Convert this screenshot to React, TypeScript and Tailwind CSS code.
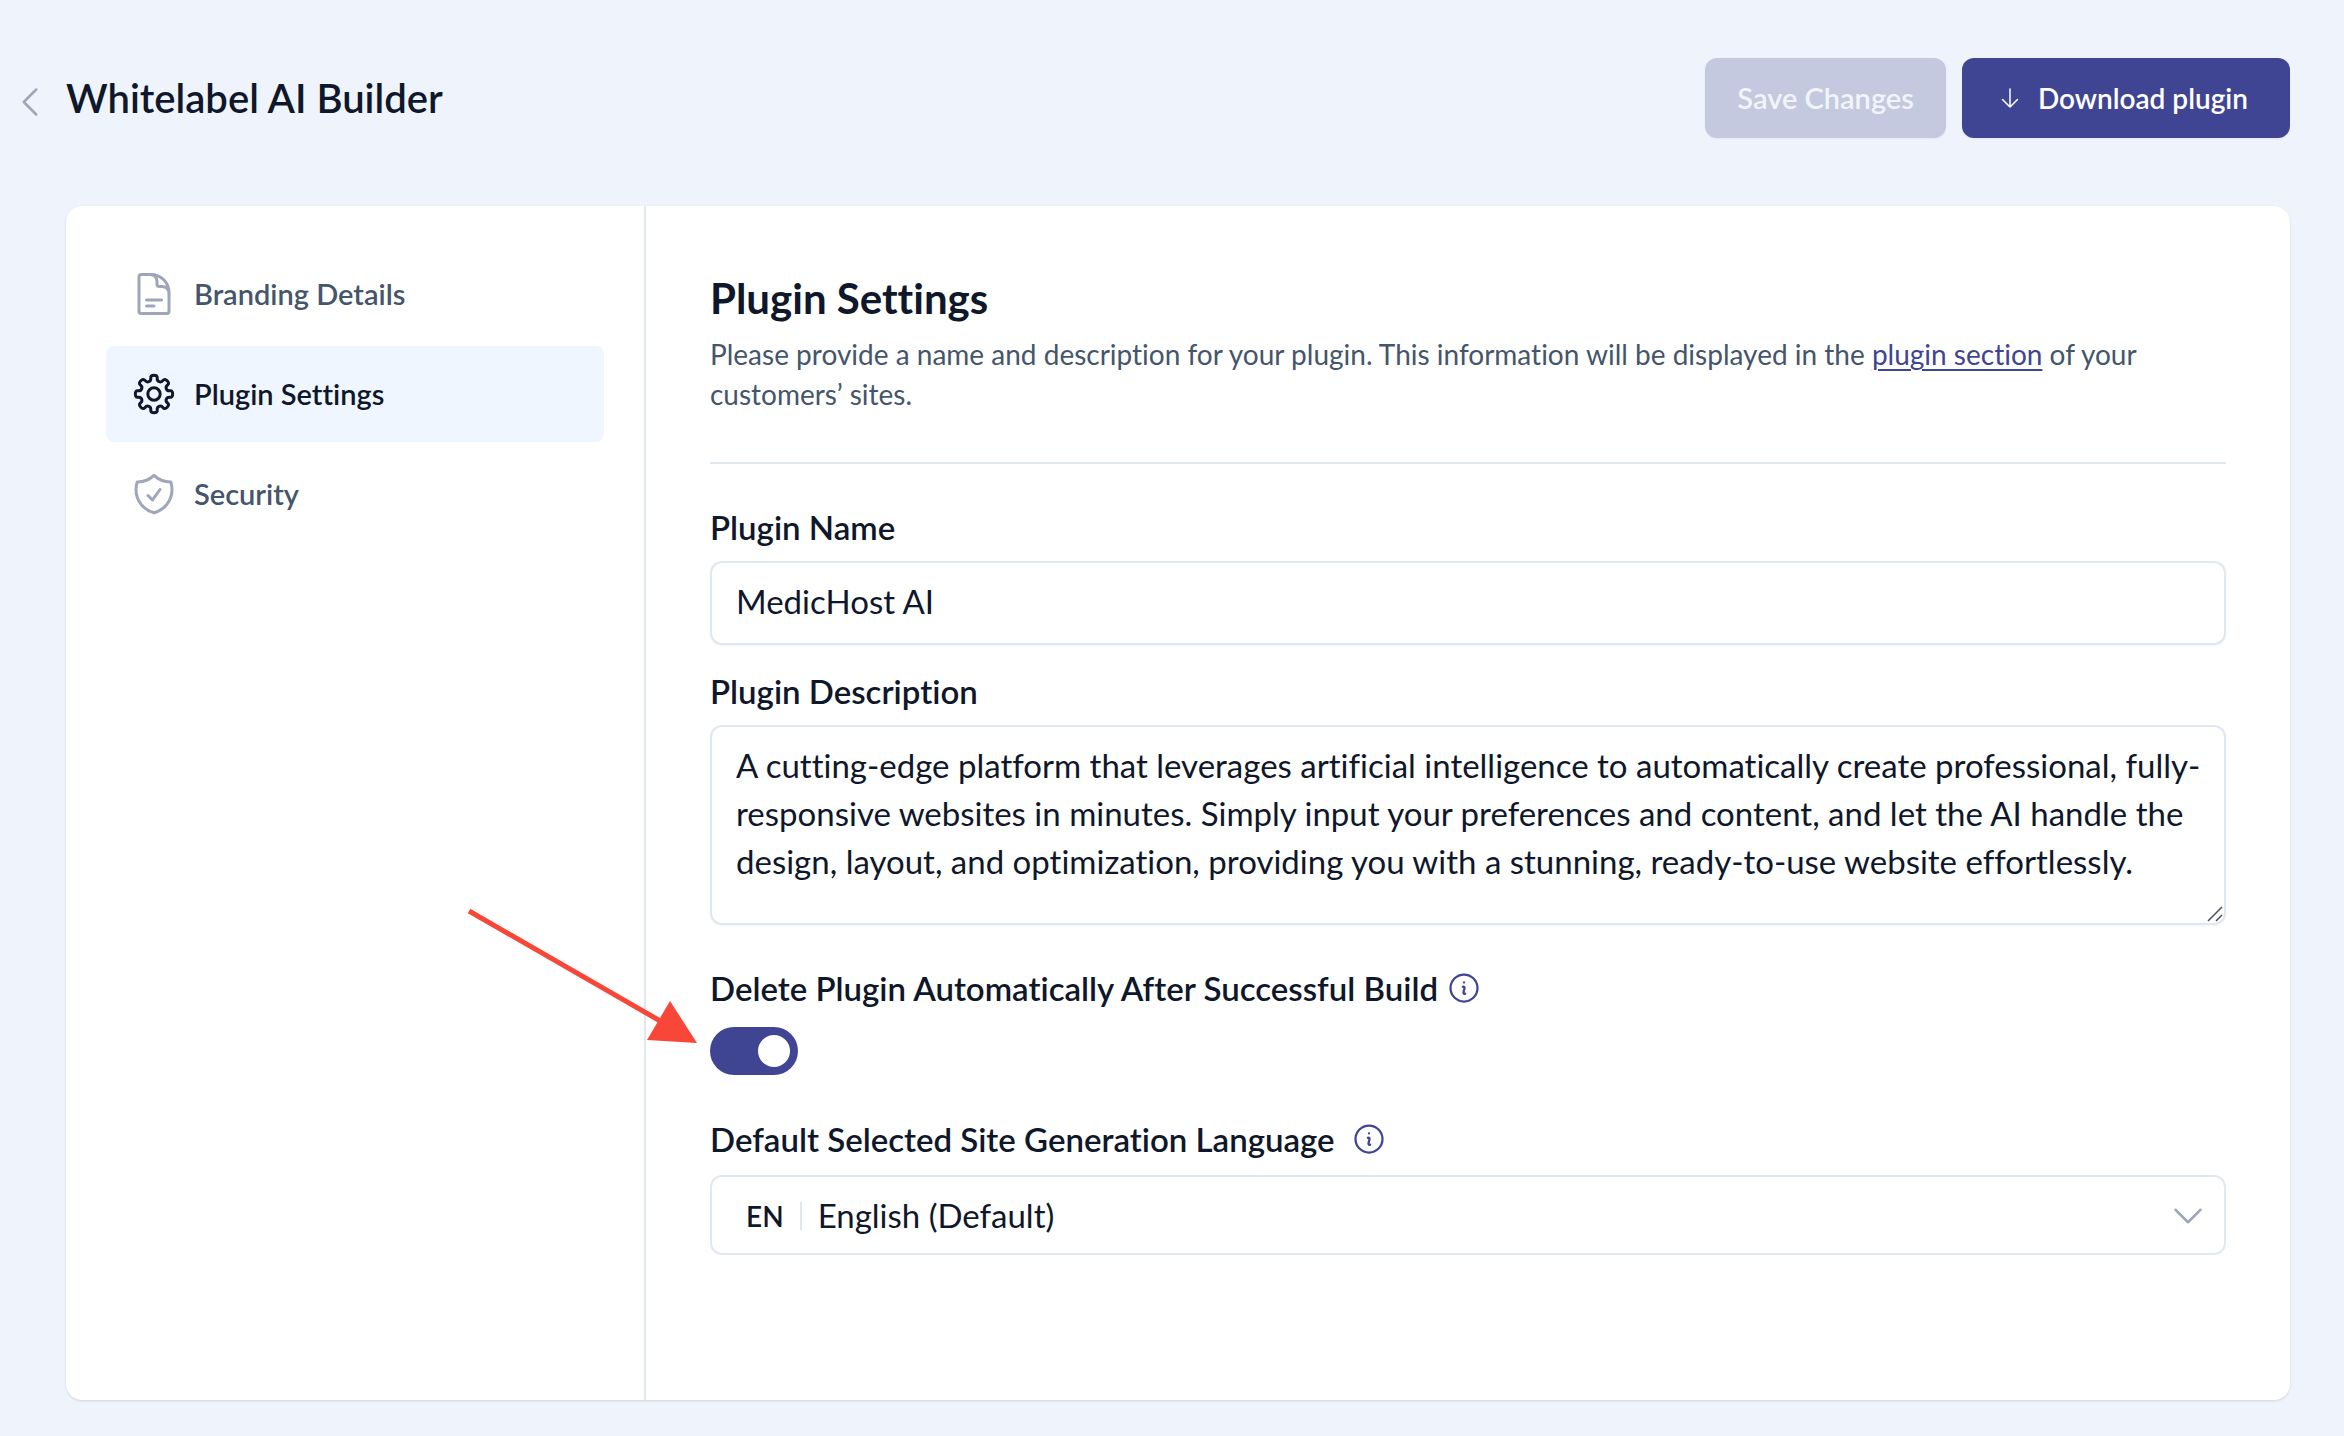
import React, { useState } from 'react';
import clsx from 'clsx';
import {
  HiOutlineArrowDown,
  HiOutlineChevronDown,
  HiOutlineChevronLeft,
  HiOutlineDocumentText,
  HiOutlineInformationCircle,
  HiOutlineShieldCheck,
} from 'react-icons/hi2';

const DEFAULT_DESCRIPTION =
  'A cutting-edge platform that leverages artificial intelligence to automatically create professional, fully-responsive websites in minutes. Simply input your preferences and content, and let the AI handle the design, layout, and optimization, providing you with a stunning, ready-to-use website effortlessly.';

// Outline of an eight tooth gear, corners smoothed with quadratic curves
const gearPath = (() => {
  const pts: [number, number][] = [];
  for (let i = 0; i < 8; i++) {
    for (const [offset, r] of [[-11, 19], [11, 19], [12, 13.6], [33, 13.6]]) {
      const a = ((i * 45 + offset - 90) * Math.PI) / 180;
      pts.push([24 + r * Math.cos(a), 24 + r * Math.sin(a)]);
    }
  }
  const mid = (a: [number, number], b: [number, number]) =>
    `${((a[0] + b[0]) / 2).toFixed(2)} ${((a[1] + b[1]) / 2).toFixed(2)}`;
  let d = `M${mid(pts[pts.length - 1], pts[0])}`;
  pts.forEach((p, i) => {
    d += `Q${p[0].toFixed(2)} ${p[1].toFixed(2)} ${mid(p, pts[(i + 1) % pts.length])}`;
  });
  return d + 'Z';
})();

function GearIcon({ size = 48, className }: { size?: number; className?: string }) {
  return (
    <svg width={size} height={size} viewBox="0 0 48 48" fill="none" stroke="currentColor" strokeWidth="3" strokeLinejoin="round" className={className}>
      <path d={gearPath} />
      <circle cx="24" cy="24" r="6.2" />
    </svg>
  );
}

function InfoButton({ label }: { label: string }) {
  return (
    <button type="button" aria-label={label} className="text-[#3f4593] cursor-pointer">
      <HiOutlineInformationCircle size={36} />
    </button>
  );
}

const navItems = [
  { id: 'branding', label: 'Branding Details', icon: HiOutlineDocumentText },
  { id: 'plugin', label: 'Plugin Settings', icon: GearIcon },
  { id: 'security', label: 'Security', icon: HiOutlineShieldCheck },
];

export default function App() {
  const [active, setActive] = useState('plugin');
  const [name, setName] = useState('MedicHost AI');
  const [description, setDescription] = useState(DEFAULT_DESCRIPTION);
  const [autoDelete, setAutoDelete] = useState(true);

  return (
    <div className="min-h-screen flex flex-col bg-[#eff3fb] pb-9 font-[Lato,sans-serif] [font-variant-ligatures:none] text-slate-900">
      <header className="flex items-center justify-between pl-[10px] pr-[54px] pt-[58px] pb-[68px]">
        <div className="flex items-center gap-4">
          <button type="button" aria-label="Back" className="pt-2 text-[#9fa6ba] cursor-pointer">
            <HiOutlineChevronLeft size={40} />
          </button>
          <h1 className="text-[40px] leading-[48px] font-semibold">Whitelabel AI Builder</h1>
        </div>
        <div className="flex gap-4">
          <button
            type="button"
            disabled
            className="h-20 px-8 rounded-xl bg-[#c5c9e0] text-[29px] font-semibold text-[#f2f4fb] shadow-xs"
          >
            Save Changes
          </button>
          <button
            type="button"
            className="h-20 pl-9 pr-[42px] flex items-center gap-4 rounded-xl bg-[#3f4593] text-[28px] font-semibold text-white shadow-xs cursor-pointer"
          >
            <HiOutlineArrowDown size={24} />
            <span>Download plugin</span>
          </button>
        </div>
      </header>

      <div className="flex-1 flex ml-[66px] mr-[54px] rounded-2xl bg-white shadow-sm">
        {/* Sidebar */}
        <nav className="w-[580px] shrink-0 flex flex-col gap-1 p-10 border-r-2 border-slate-200">
          {navItems.map(({ id, label, icon: Icon }) => (
            <button
              key={id}
              type="button"
              onClick={() => setActive(id)}
              className={clsx(
                'h-24 px-6 flex items-center gap-4 rounded-lg text-[29px] font-semibold cursor-pointer',
                active === id ? 'bg-[#eff6ff] text-slate-900' : 'text-slate-600'
              )}
            >
              <Icon size={48} className={active === id ? 'text-slate-900' : 'text-[#9fa6ba]'} />
              <span>{label}</span>
            </button>
          ))}
        </nav>

        {/* Settings form */}
        <main className="flex-1 min-w-0 px-16 pt-[68px] pb-16">
          <h2 className="text-[42px] leading-[48px] font-bold">Plugin Settings</h2>
          <p className="mt-3 text-[28px] leading-10 text-slate-600">
            Please provide a name and description for your plugin. This information will be displayed in the{' '}
            <a href="#plugins" className="text-[#3f4593] underline decoration-2 underline-offset-4">plugin section</a>{' '}
            of your customers’ sites.
          </p>
          <hr className="mt-12 border-t-2 border-slate-200" />

          <label htmlFor="plugin-name" className="block mt-[43px] text-[33px] leading-10 font-semibold">
            Plugin Name
          </label>
          <input
            id="plugin-name"
            type="text"
            value={name}
            onChange={(e) => setName(e.target.value)}
            className="mt-[14px] block w-full h-[84px] px-6 pb-1 rounded-xl border-2 border-slate-200 bg-white text-[33px] shadow-xs outline-none focus:border-[#3f4593]"
          />

          <label htmlFor="plugin-description" className="block mt-[26px] text-[33px] leading-10 font-semibold">
            Plugin Description
          </label>
          <div className="relative mt-[14px]">
            <textarea
              id="plugin-description"
              value={description}
              onChange={(e) => setDescription(e.target.value)}
              className="block w-full h-[200px] pl-6 pr-4 pt-[14px] rounded-xl border-2 border-slate-200 bg-white text-[33px] leading-[48px] shadow-xs outline-none resize-none focus:border-[#3f4593]"
            />
            <svg width="16" height="16" viewBox="0 0 16 16" stroke="#474d5e" strokeWidth="1.5" className="absolute right-[3px] bottom-[3px] pointer-events-none">
              <path d="M1 15 15 1M9 15l6-6" />
            </svg>
          </div>

          <div className="mt-[43px] flex items-center gap-2 h-10">
            <label htmlFor="auto-delete" className="text-[33px] leading-10 font-semibold">
              Delete Plugin Automatically After Successful Build
            </label>
            <InfoButton label="About automatic plugin deletion" />
          </div>
          <div className="relative mt-[19px] w-[88px] h-12">
            <input
              id="auto-delete"
              type="checkbox"
              role="switch"
              checked={autoDelete}
              onChange={(e) => setAutoDelete(e.target.checked)}
              className="block w-[88px] h-12 p-2 appearance-none rounded-full bg-slate-300 checked:bg-[#3f4593] cursor-pointer before:block before:size-8 before:rounded-full before:bg-white checked:before:ml-10"
            />
            {/* Pointer towards the switch */}
            <svg width="232" height="138" viewBox="0 0 232 138" className="absolute right-[100px] bottom-[30px] pointer-events-none">
              <path d="M3 4 196 115" stroke="#f84738" strokeWidth="5" />
              <path d="M204 94 231 136 181 133Z" fill="#f84738" />
            </svg>
          </div>

          <div className="mt-11 flex items-center gap-4 h-10">
            <label htmlFor="language" className="text-[33px] leading-10 font-semibold">
              Default Selected Site Generation Language
            </label>
            <InfoButton label="About the default language" />
          </div>
          <div className="relative mt-4 flex items-center h-20 pl-[34px] pt-[2px] rounded-xl border-2 border-slate-200 bg-white">
            <span className="text-[28px] font-semibold">EN</span>
            <span className="ml-4 w-[2px] h-7 bg-slate-200" />
            <select id="language" defaultValue="en" className="flex-1 h-full pl-4 pr-20 appearance-none bg-transparent text-[33px] outline-none cursor-pointer">
              <option value="en">English (Default)</option>
            </select>
            <HiOutlineChevronDown size={40} className="absolute right-4 text-[#9fa6ba] pointer-events-none" />
          </div>
        </main>
      </div>
    </div>
  );
}
